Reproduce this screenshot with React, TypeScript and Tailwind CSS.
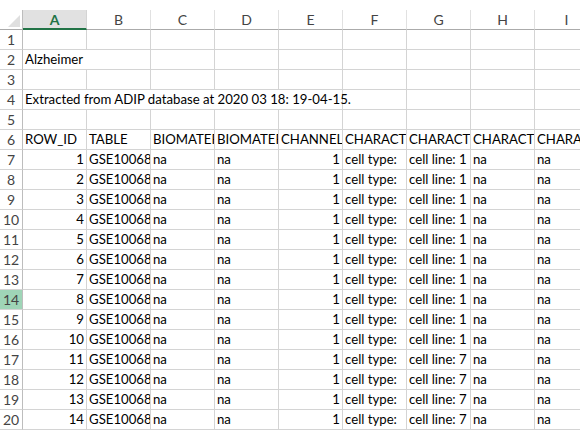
import React from "react";

const cols = ["A", "B", "C", "D", "E", "F", "G", "H", "I"];

type Cell = { t: string; right?: boolean };

const dataRows: (Cell | null)[][] = [];
dataRows.push([null, null, null, null, null, null, null, null, null]);
dataRows.push([{ t: "Alzheimer" }, null, null, null, null, null, null, null, null]);
dataRows.push([null, null, null, null, null, null, null, null, null]);
dataRows.push([
  { t: "Extracted from ADIP database at 2020 03 18: 19-04-15." },
  null, null, null, null, null, null, null, null,
]);
dataRows.push([null, null, null, null, null, null, null, null, null]);
dataRows.push([
  { t: "ROW_ID" },
  { t: "TABLE" },
  { t: "BIOMATERIAL" },
  { t: "BIOMATERIAL" },
  { t: "CHANNEL_COUNT" },
  { t: "CHARACTERISTICS" },
  { t: "CHARACTERISTICS" },
  { t: "CHARACTERISTICS" },
  { t: "CHARACTERISTICS" },
]);
for (let i = 1; i <= 14; i++) {
  dataRows.push([
    { t: String(i), right: true },
    { t: "GSE100680" },
    { t: "na" },
    { t: "na" },
    { t: "1", right: true },
    { t: "cell type:\u00a0\u00a0\u00a0iPSC" },
    { t: i >= 11 ? "cell line: 7" : "cell line: 1" },
    { t: "na" },
    { t: "na" },
  ]);
}

export default function App() {
  return (
    <div
      className="w-[580px] h-[434px] overflow-hidden bg-white text-black"
      style={{ fontFamily: "Lato, 'Liberation Sans', sans-serif" }}
    >
      <div className="h-[10px] bg-white" />
      <div className="flex h-[20px] w-max">
        <div className="w-[23px] h-[20px] border-r border-b border-r-[#bdbdbd] border-b-[#ababab] bg-white relative">
          <svg className="absolute right-[2px] bottom-[2px]" width="12" height="12" viewBox="0 0 12 12">
            <polygon points="12,0 12,12 0,12" fill="#dfdfdf" />
          </svg>
        </div>
        {cols.map((c, i) => (
          <div
            key={c}
            className={
              i === 0
                ? "w-[64px] h-[20px] shrink-0 border-r border-r-[#d4d4d4] border-b-2 border-b-[#217346] bg-[#e1e1e1] flex items-center justify-center text-[14px] font-bold text-[#217346]"
                : "w-[64px] h-[20px] shrink-0 border-r border-r-[#e1e1e1] border-b border-b-[#ababab] flex items-center justify-center text-[14px] text-[#444444]"
            }
          >
            {c}
          </div>
        ))}
      </div>
      {dataRows.map((row, ri) => {
        const rn = ri + 1;
        const spanRow = rn === 2 || rn === 4;
        const spanEnd = rn === 2 ? 1 : 4;
        return (
          <div key={ri} className="flex h-[20px] w-max">
            <div
              className={
                rn === 14
                  ? "w-[23px] h-[20px] shrink-0 border-r border-b border-r-[#bdbdbd] border-b-[#d4d4d4] bg-[#9fd5b7] flex items-center justify-center text-[14px] text-[#444444]"
                  : "w-[23px] h-[20px] shrink-0 border-r border-b border-r-[#bdbdbd] border-b-[#d4d4d4] flex items-center justify-center text-[14px] text-[#444444]"
              }
            >
              {rn}
            </div>
            {row.map((cell, ci) => {
              if (spanRow) {
                const noRight = ci < spanEnd;
                return (
                  <div
                    key={ci}
                    className={
                      noRight
                        ? "w-[64px] h-[20px] shrink-0 border-b border-b-[#d4d4d4] relative"
                        : "w-[64px] h-[20px] shrink-0 border-r border-b border-[#d4d4d4] relative"
                    }
                  >
                    {cell ? (
                      <span className="absolute left-[2px] bottom-[1px] whitespace-nowrap text-[13.2px] leading-[18px] z-10">
                        {cell.t}
                      </span>
                    ) : null}
                  </div>
                );
              }
              return (
                <div
                  key={ci}
                  className={
                    cell?.right
                      ? "w-[64px] h-[20px] shrink-0 border-r border-b border-[#d4d4d4] overflow-hidden whitespace-nowrap px-[2px] flex items-end justify-end pb-[1px] text-[13.2px] leading-[18px]"
                      : "w-[64px] h-[20px] shrink-0 border-r border-b border-[#d4d4d4] overflow-hidden whitespace-nowrap pl-[2px] flex items-end justify-start pb-[1px] text-[13.2px] leading-[18px]"
                  }
                >
                  {cell ? <span className="whitespace-nowrap">{cell.t}</span> : null}
                </div>
              );
            })}
          </div>
        );
      })}
    </div>
  );
}
